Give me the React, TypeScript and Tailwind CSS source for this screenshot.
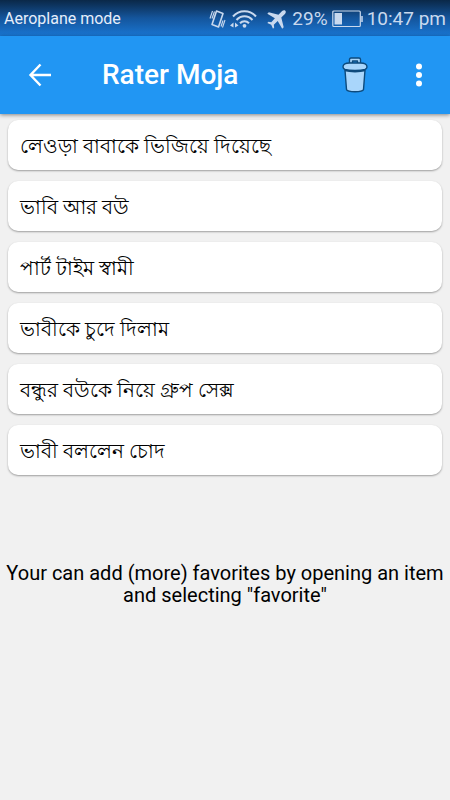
const titles = [
  'লেওড়া বাবাকে ভিজিয়ে দিয়েছে',
  'ভাবি আর বউ',
  'পার্ট টাইম স্বামী',
  'ভাবীকে চুদে দিলাম',
  'বন্ধুর বউকে নিয়ে গ্রুপ সেক্স',
  'ভাবী বললেন চোদ',
];

function VibrateIcon() {
  return (
    <svg width="17" height="20" viewBox="0 0 17 20" fill="none" stroke="currentColor" aria-hidden="true">
      <path d="M7.500 2 14 4.500 9.500 18 3 15.500z" strokeWidth="1.600" strokeLinejoin="round" />
      <path d="M3.500 2 1 9.500M5.500 2.500 3 9.500M16 11l-2.500 7.500M14 11.500 12 17.500" strokeWidth="1.100" />
    </svg>
  );
}

function WifiIcon() {
  return (
    <svg width="27" height="20" viewBox="0 0 27 20" fill="none" stroke="currentColor" strokeWidth="2" aria-hidden="true">
      <path d="M3 7.500C9 .5 20 .5 26 7.500M6.500 11C11 6 18 6 22.500 11M10 14.300c2.500-2.600 6.500-2.600 9 0" />
      <circle cx="14.500" cy="16.800" r="1.900" fill="currentColor" stroke="none" />
      <path d="M0 16.500 3.500 13.500v5zM8.500 16.500 5 13.500v5z" fill="currentColor" stroke="none" />
    </svg>
  );
}

function PlaneIcon() {
  return (
    <svg width="19" height="19" viewBox="0 0 19 19" fill="currentColor" aria-hidden="true">
      <path d="M18.300.7c-.9-.9-2.300-.5-3.200.4L11.500 4.700 1.800 2.300.3 3.800l7.600 4.500-3.600 3.900-2.800-.4L.3 13l3.900 1.800L6 18.700l1.200-1.200-.4-2.800 3.900-3.600 4.500 7.600 1.500-1.500-2.400-9.700 3.600-3.600c.9-.9 1.300-2.300.4-3.200z" />
    </svg>
  );
}

function BatteryIcon() {
  return (
    <svg width="31" height="18" viewBox="0 0 31 18" fill="none" stroke="currentColor" aria-hidden="true">
      <rect x=".8" y="1" width="27.500" height="15.500" rx="1" strokeWidth="1.200" />
      <path d="M30 6v6" strokeWidth="1.500" />
      <path d="M2.500 3h7.500v11.500h-7.500z" fill="currentColor" stroke="none" />
    </svg>
  );
}

function BackIcon() {
  return (
    <svg width="24" height="24" viewBox="0 0 24 24" fill="none" stroke="currentColor" strokeWidth="2.400" aria-hidden="true">
      <path d="M12.500 1.500 2.500 12l10 10.500M2.500 12H23" />
    </svg>
  );
}

function TrashIcon() {
  return (
    <svg width="26" height="36" viewBox="0 0 26 36" fill="#a9d6fb" stroke="#0d4a7c" strokeWidth="1.400" strokeLinejoin="round" aria-hidden="true">
      <path d="M3 13 4.500 32.500c1 3 16 3 17 0L23 13z" />
      <path d="M7.500 6.500v-4c0-1 .5-1.500 1.500-1.500h8c1 0 1.500.5 1.500 1.500v4h-3V4h-5v2.500z" />
      <path d="M1 10c0-2.500 2.500-4 6.500-4h11c4 0 6.500 1.500 6.500 4 0 1.500-1 2-2 2.500-5 1.300-15 1.300-20 0-1-.5-2-1-2-2.500z" />
      <path d="M3 13.500c5 1.500 15 1.500 20 0" fill="none" strokeWidth="1.800" />
    </svg>
  );
}

function MoreIcon() {
  return (
    <svg width="8" height="24" viewBox="0 0 8 24" fill="currentColor" aria-hidden="true">
      <circle cx="4" cy="3.500" r="3" />
      <circle cx="4" cy="12" r="3" />
      <circle cx="4" cy="20.500" r="3" />
    </svg>
  );
}

export default function App() {
  return (
    <div className="min-h-screen bg-[#f1f1f1] font-[Roboto,'Noto_Sans',sans-serif] text-black">
      <div className="flex h-9 items-center justify-between bg-linear-to-b from-[#0a2848] via-[#14559c] to-[#1976d2] px-1 pt-0.5 text-[#c9d9ee]">
        <span className="text-base text-[#e6eefa]">Aeroplane mode</span>
        <div className="flex items-center">
          <VibrateIcon />
          <span className="ml-1 flex"><WifiIcon /></span>
          <span className="ml-2.5 flex"><PlaneIcon /></span>
          <span className="ml-1.5 text-[19px]">29%</span>
          <span className="ml-1 flex"><BatteryIcon /></span>
          <span className="ml-1 text-[19px]">10:47 pm</span>
        </div>
      </div>
      <header className="flex h-[78px] items-center bg-[#2196f3] text-white shadow-[0_1px_4px_rgba(0,0,0,0.45)]">
        <button type="button" aria-label="Back" className="ml-4 flex size-12 items-center justify-center">
          <BackIcon />
        </button>
        <h1 className="ml-[38px] flex-1 text-[28px] font-medium">Rater Moja</h1>
        <button type="button" aria-label="Delete all" className="flex size-12 items-center justify-center">
          <TrashIcon />
        </button>
        <button type="button" aria-label="More options" className="mr-[7px] ml-4 flex size-12 items-center justify-center">
          <MoreIcon />
        </button>
      </header>
      <main>
        <ul className="flex flex-col gap-[11px] px-2 pt-1.5">
          {titles.map((title) => (
            <li key={title}>
              <button
                type="button"
                className="flex h-[50px] w-full items-center rounded-[10px] bg-white px-3 pt-0.5 text-left text-xl font-medium shadow-[0_1px_2px_rgba(0,0,0,0.35)]"
              >
                {title}
              </button>
            </li>
          ))}
        </ul>
        <p className="mt-[87px] px-1 text-center text-xl leading-[22px]">
          Your can add (more) favorites by opening an item and selecting "favorite"
        </p>
      </main>
    </div>
  );
}
